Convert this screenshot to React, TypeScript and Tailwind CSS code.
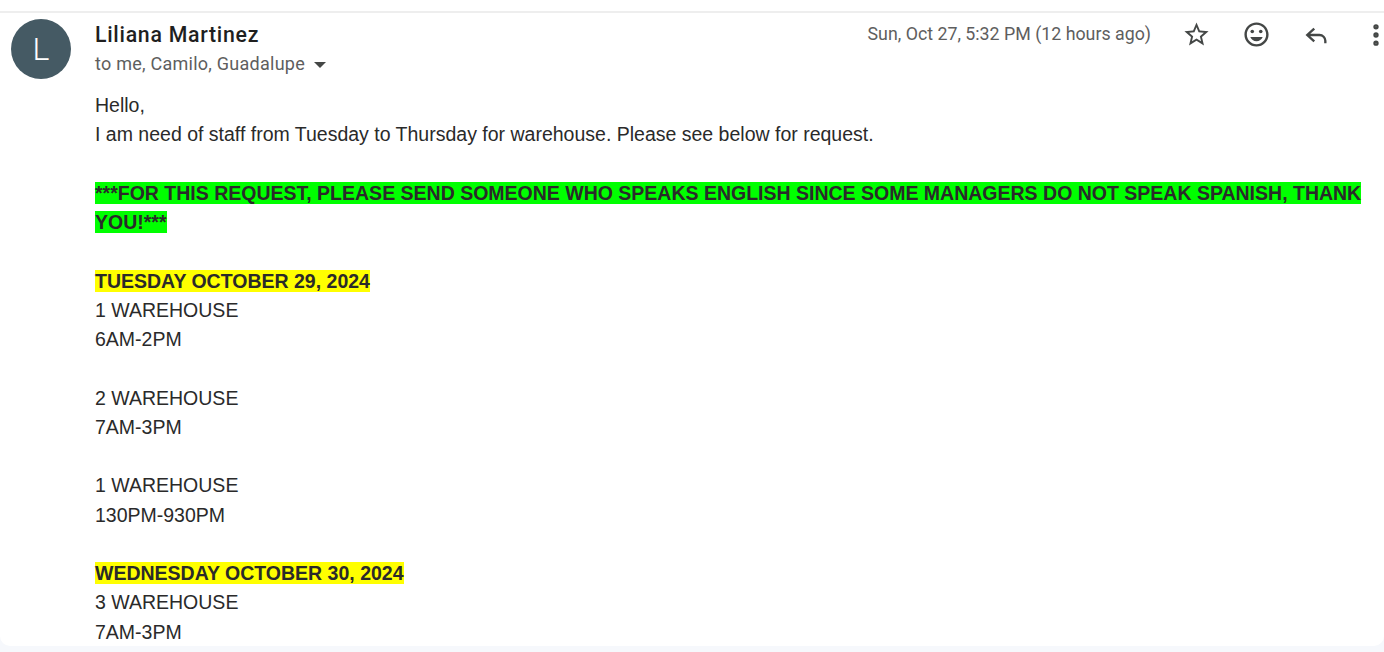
import { MoreVertical } from 'lucide-react'

const bodyLines: { text: string; mark?: 'green' | 'yellow' }[] = [
  { text: 'Hello,' },
  { text: 'I am need of staff from Tuesday to Thursday for warehouse. Please see below for request.' },
  { text: '' },
  {
    text: '***FOR THIS REQUEST, PLEASE SEND SOMEONE WHO SPEAKS ENGLISH SINCE SOME MANAGERS DO NOT SPEAK SPANISH, THANK YOU!***',
    mark: 'green',
  },
  { text: '' },
  { text: 'TUESDAY OCTOBER 29, 2024', mark: 'yellow' },
  { text: '1 WAREHOUSE' },
  { text: '6AM-2PM' },
  { text: '' },
  { text: '2 WAREHOUSE' },
  { text: '7AM-3PM' },
  { text: '' },
  { text: '1 WAREHOUSE' },
  { text: '130PM-930PM' },
  { text: '' },
  { text: 'WEDNESDAY OCTOBER 30, 2024', mark: 'yellow' },
  { text: '3 WAREHOUSE' },
  { text: '7AM-3PM' },
]

function Icons() {
  return (
    <div className="mt-[1px] flex items-center text-[#444746]">
      <div className="flex w-[60px] justify-center">
        <svg width="29" height="29" viewBox="0 0 24 24" fill="currentColor">
          <path d="M22 9.24l-7.19-.62L12 2 9.19 8.63 2 9.24l5.46 4.73L5.82 21 12 17.27 18.18 21l-1.63-7.03L22 9.24zM12 15.4l-3.76 2.27 1-4.28-3.32-2.88 4.38-.38L12 6.1l1.71 4.04 4.38.38-3.32 2.88 1 4.28L12 15.4z" />
        </svg>
      </div>
      <div className="flex w-[60px] justify-center">
        <svg width="29" height="29" viewBox="0 0 24 24" fill="currentColor">
          <path d="M11.99 2C6.47 2 2 6.48 2 12s4.47 10 9.99 10C17.52 22 22 17.52 22 12S17.52 2 11.99 2zM12 20c-4.42 0-8-3.58-8-8s3.58-8 8-8 8 3.58 8 8-3.58 8-8 8z" />
          <circle cx="15.5" cy="9.5" r="1.5" />
          <circle cx="8.5" cy="9.5" r="1.5" />
          <path d="M12 17.500c2.330 0 4.310-1.460 5.110-3.500H6.890c.8 2.040 2.780 3.500 5.110 3.500z" />
        </svg>
      </div>
      <div className="flex w-[60px] justify-center">
        <svg width="28" height="28" viewBox="0 0 24 24" fill="none" stroke="currentColor" strokeWidth="2">
          <path d="M10.500 6.500 4.500 12l6 5.500M4.500 12H15a5 5 0 0 1 5 5v2" />
        </svg>
      </div>
      <MoreVertical size={28} strokeWidth={2.6} className="-mr-[6px] ml-[16px]" />
    </div>
  )
}

export default function App() {
  return (
    <div className="h-[652px] w-[1384px] overflow-hidden bg-[#f6f8fc] font-['Liberation_Sans',sans-serif]">
      <div className="h-[646px] overflow-hidden rounded-b-[10px] bg-white">
        <div className="h-[11px]" />
        <div className="h-[2px] bg-[#eeeeee]" />
        <div className="flex pl-[11px] pt-[6px]">
          <div className="flex h-[60px] w-[60px] shrink-0 items-center justify-center rounded-full bg-[#455a64] font-['Roboto',sans-serif] text-[32px] font-light text-white">
            L
          </div>
          <div className="ml-[24px] min-w-0 flex-1">
            <div className="flex h-[29.5px] items-start justify-between">
              <div>
                <div className="mt-[3px] font-['Roboto',sans-serif] text-[21.3px] leading-[26px] font-medium tracking-[0.72px] text-[#1f1f1f]">
                  Liliana Martinez
                </div>
                <div className="mt-[4px] flex items-center font-['Roboto',sans-serif] text-[18px] leading-[24px] tracking-[0.25px] text-[#5e5e5e]">
                  to me, Camilo, Guadalupe
                  <span className="ml-[9px] mt-[1px] h-0 w-0 border-x-[6px] border-t-[6px] border-x-transparent border-t-[#444746]" />
                </div>
              </div>
              <div className="flex items-center">
                <span className="mr-[15px] mt-[1px] font-['Roboto',sans-serif] text-[17.8px] text-[#5e5e5e]">
                  Sun, Oct 27, 5:32 PM (12 hours ago)
                </span>
                <Icons />
              </div>
            </div>
            <div className="mt-[42.5px] pr-[20px] text-[19.5px] leading-[29.25px] text-[#2a2a2a]">
              {bodyLines.map((line, i) =>
                line.text === '' ? (
                  <div key={i} className="h-[29.25px]" />
                ) : (
                  <div key={i}>
                    {line.mark ? (
                      <span className={line.mark === 'green' ? 'bg-[#00ff00] font-bold' : 'bg-[#ffff00] font-bold'}>
                        {line.text}
                      </span>
                    ) : (
                      line.text
                    )}
                  </div>
                ),
              )}
            </div>
          </div>
        </div>
      </div>
    </div>
  )
}
